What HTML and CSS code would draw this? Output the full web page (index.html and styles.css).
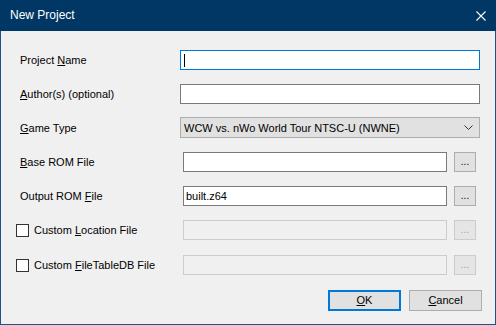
FILE: index.html
```html
<!DOCTYPE html>
<html lang="en">
<head>
    <meta charset="UTF-8">
    <title>New Project</title>
    <link rel="stylesheet" href="styles.css">
</head>
<body>
    <div class="window">
        <div class="titlebar">
            <span class="title">New Project</span>
            <svg class="close" width="10" height="10" viewBox="0 0 10 10">
                <path d="M0.5 0.5 L9.5 9.5 M9.5 0.5 L0.5 9.5" stroke="#fff" stroke-width="1.1" fill="none"/>
            </svg>
        </div>

        <div class="content">
            <div class="row">
                <span class="label">Project <u>N</u>ame</span>
                <div class="field wide focused"><span class="caret"></span></div>
            </div>
            <div class="row">
                <span class="label"><u>A</u>uthor(s) (optional)</span>
                <div class="field wide"></div>
            </div>
            <div class="row row-select">
                <span class="label"><u>G</u>ame Type</span>
                <div class="select">
                    <span>WCW vs. nWo World Tour NTSC-U (NWNE)</span>
                    <svg width="9" height="5" viewBox="0 0 9 5">
                        <path d="M0.5 0.5 L4.5 4.5 L8.5 0.5" stroke="#333" stroke-width="1" fill="none"/>
                    </svg>
                </div>
            </div>
            <div class="row">
                <span class="label"><u>B</u>ase ROM File</span>
                <div class="field file"></div>
                <div class="browse">...</div>
            </div>
            <div class="row">
                <span class="label">Output ROM <u>F</u>ile</span>
                <div class="field file">built.z64</div>
                <div class="browse">...</div>
            </div>
            <div class="row">
                <label class="check"><span class="box"></span><span>Custom <u>L</u>ocation File</span></label>
                <div class="field file disabled"></div>
                <div class="browse disabled">...</div>
            </div>
            <div class="row row-last">
                <label class="check"><span class="box"></span><span>Custom <u>F</u>ileTableDB File</span></label>
                <div class="field file disabled"></div>
                <div class="browse disabled">...</div>
            </div>

            <div class="buttons">
                <div class="btn default"><u>O</u>K</div>
                <div class="btn"><u>C</u>ancel</div>
            </div>
        </div>
    </div>
</body>
</html>
```

FILE: styles.css
```css
body {
    margin: 0;
    background-color: #f0f0f0;
    font-family: "Liberation Sans", Arial, sans-serif;
    font-size: 11px;
    color: black;
}
.window {
    width: 496px;
    height: 325px;
    box-sizing: border-box;
    border: 1px solid #1f5288;
    border-top: none;
    background-color: #f0f0f0;
}
.titlebar {
    height: 31px;
    margin: 0 -1px;
    background-color: #003764;
    color: white;
    display: flex;
    align-items: center;
    justify-content: space-between;
    padding: 0 10px 1px 10px;
    box-sizing: border-box;
}
.title {
    font-size: 12px;
}
.close {
    margin-top: 1px;
}
.content {
    padding: 19px 0 0 18px;
    display: flex;
    flex-direction: column;
    gap: 14px;
}
.row {
    display: flex;
    align-items: center;
    height: 20px;
}
.row-select {
    height: 21px;
    margin-top: -1px;
}
.row-last {
    margin-top: 1px;
}
.label {
    width: 160px;
    padding-left: 1px;
}
.field {
    height: 20px;
    box-sizing: border-box;
    background-color: white;
    border: 1px solid #7a7a7a;
    display: flex;
    align-items: center;
    padding-left: 2px;
}
.field.wide {
    width: 300px;
}
.field.focused {
    border-color: #0078d7;
}
.caret {
    width: 1px;
    height: 13px;
    background-color: black;
    margin-left: 1px;
}
.field.file {
    width: 264px;
    margin-left: 3px;
}
.field.disabled {
    background-color: #f0f0f0;
    border-color: #cccccc;
}
.select {
    width: 300px;
    height: 21px;
    box-sizing: border-box;
    background-color: #e1e1e1;
    border: 1px solid #adadad;
    display: flex;
    align-items: center;
    justify-content: space-between;
    padding: 0 6px 0 3px;
}
.browse {
    width: 22px;
    height: 20px;
    box-sizing: border-box;
    margin-left: 7px;
    background-color: #e1e1e1;
    border: 1px solid #adadad;
    text-align: center;
    line-height: 18px;
    font-size: 10px;
}
.browse.disabled {
    background-color: #e5e5e5;
    border-color: #cccccc;
    color: #a0a0a0;
}
.check {
    width: 164px;
    display: flex;
    align-items: center;
    margin-left: -3px;
}
.box {
    width: 13px;
    height: 13px;
    box-sizing: border-box;
    border: 1px solid #333;
    background-color: white;
    margin-right: 5px;
}
.buttons {
    display: flex;
    justify-content: flex-end;
    gap: 8px;
    padding-right: 13px;
    margin-top: 1px;
}
.btn {
    width: 73px;
    height: 21px;
    box-sizing: border-box;
    background-color: #e1e1e1;
    border: 1px solid #adadad;
    text-align: center;
    line-height: 19px;
}
.btn.default {
    border: 2px solid #0078d7;
    line-height: 17px;
}
```
